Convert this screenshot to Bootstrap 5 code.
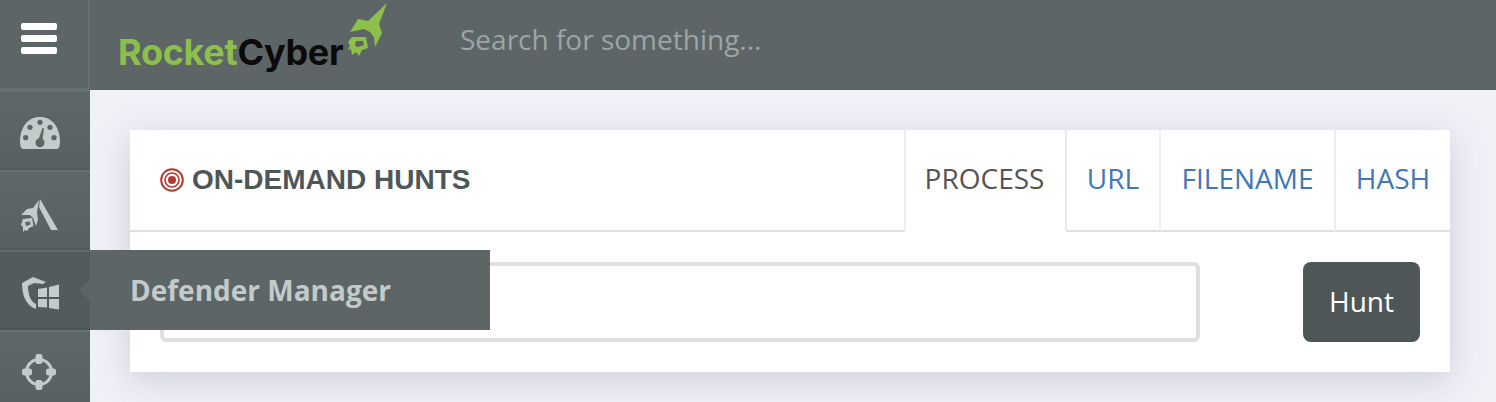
<!doctype html>
<html lang="en"><head><meta charset="utf-8"><title>On-Demand Hunts</title>
<link href="https://cdn.jsdelivr.net/npm/bootstrap@5.3.0/dist/css/bootstrap.min.css" rel="stylesheet">
<style>
html,body{height:402px;overflow:hidden}
body{background:#f0f1f7;font-family:"Open Sans",sans-serif}
.topbar{height:90px;background:#5d6566}
.burger{width:90px;height:90px;border-right:2px solid #677071;border-bottom:2px solid #677071;flex:none;padding:23px 0 0 21px;gap:5px}
.burger span{display:block;width:36px;height:7px;border-radius:2px;background:#fff}
.logo{margin-left:28px;height:90px;width:281px;flex:none}
.logo-text{left:0;top:31px;font-family:"Inter",sans-serif;font-weight:700;font-size:36px;line-height:42px;letter-spacing:-.3px;white-space:nowrap}
.logo-a{color:#8cc04b}.logo-b{color:#0b0b0b}
.logo svg{left:226px;top:0}
.search-box{margin-left:61px;width:600px;height:90px;border:0;background:transparent;font-size:28px;color:#fff;padding:0 0 13px;outline:0}
.search-box::placeholder{color:#9ca5a5;opacity:1}
.rail{width:90px;flex:none;background:#5d6566;height:312px}
.rail-item{height:80px;padding-left:20px;border-top:2px solid #687172;border-bottom:2px solid #525a5b;background:linear-gradient(#5f6768,#586061)}
.rail-item.current{background:#535b5c;border-top-color:#626a6b;border-bottom-color:#4d5455}
.ico-gauge{margin-top:6px}.ico-peak{margin-top:10px}.ico-shield{margin-top:6px}.ico-target{margin-top:3px}
.rail-tip{left:70px;top:-2px;margin-left:20px;width:400px;height:80px;background:#5d6566;color:#c3cbca;font-weight:700;font-size:28px;padding-left:40px;z-index:5}
.rail-tip::before{content:"";position:absolute;left:-11px;top:29px;border:11px solid transparent;border-left:0;border-right-color:#5d6566}
.stage{padding:40px 46px 0 40px}
.hunt-card{width:1320px;height:242px;background:#fff;box-shadow:0 8px 32px rgba(90,95,130,.24)}
.hunt-head{height:102px;border-bottom:2px solid #dfdfdf}
.hunt-title{padding-left:30px;font-family:"Liberation Sans",sans-serif;font-weight:700;font-size:28px;color:#4e5657;gap:8px}
.hunt-tabs{margin-bottom:-2px}
.hunt-tab{height:102px;padding-bottom:4px;font-size:28px;color:#3f78b5;text-decoration:none;border-right:2px solid #eee;border-bottom:2px solid #dfdfdf}
.hunt-tab:last-child{border-right:0}
.hunt-tab.on{color:#555;border-left:2px solid #eee;border-right:2px solid #e9e9e9;border-bottom-color:#fff;padding-right:2px}
.t1{width:163px}.t2{width:94px}.t3{width:175px}.t4{width:114px}
.hunt-body{padding:30px 30px 0}
.hunt-input{width:1040px;height:80px;border:4px solid #dfdfdf;border-radius:6px;outline:0;font-size:28px;padding:0 16px}
.hunt-btn{width:117px;height:80px;padding:0 0 2px;background:#4e5657;border:0;border-radius:8px;color:#fff;font-size:28px}
.hunt-btn:hover{background:#4e5657;color:#fff}
</style></head>
<body>
<header class="topbar d-flex align-items-center">
  <div class="burger d-flex flex-column">
    <span></span><span></span><span></span>
  </div>
  <div class="logo position-relative">
    <div class="logo-text position-absolute"><span class="logo-a">Rocket</span><span class="logo-b">Cyber</span></div>
    <svg class="position-absolute" width="48" height="62" viewBox="0 0 48 62" aria-hidden="true">
      <path fill="#8cc04b" d="M43 3 35 24 38 33 31 47 30 37 26 32 20 29 6 32 14 19 24 21Z"/>
      <path fill="#8cc04b" fill-rule="evenodd" d="M8 37 22 37 24 48 18 50 15 56 12 52 8 55 7 49 4 50 6 45 4 42ZM12 41 19 41 20 45 14 47 11 46Z"/>
    </svg>
  </div>
  <input class="search-box" type="text" placeholder="Search for something...">
</header>
<div class="d-flex">
  <nav class="rail">
    <div class="rail-item d-flex align-items-center">
      <svg class="ico-gauge" width="40" height="36" viewBox="1 0 40 36" aria-hidden="true"><path fill="#c4cccb" d="M1 27C1 12 9 2 21 2S41 12 41 27C41 30 40 34 38 34H4C2 34 1 30 1 27Z"/><g fill="#5d6566"><circle cx="11" cy="12.300" r="2.600"/><circle cx="21" cy="7.300" r="2.600"/><circle cx="31" cy="12.300" r="2.600"/><circle cx="6.700" cy="22.700" r="2.600"/><circle cx="35" cy="22.700" r="2.600"/><circle cx="21" cy="27.700" r="4.500"/><path d="M19 26 23.500 13 25 13.500 23 28Z"/></g></svg>
    </div>
    <div class="rail-item d-flex align-items-center">
      <svg class="ico-peak" width="40" height="36" viewBox="0 0 40 36" aria-hidden="true"><path fill="#c4cccb" d="M20 2 38 33H31L19 10Z"/><path fill="#c4cccb" d="M19 3 17 15 18 23 16 29 13 21 10 18 1 18 7 12 13 11Z"/><path fill="#c4cccb" fill-rule="evenodd" d="M3 22 12 21 13.500 29 9 31 7 34 5 33 3 35 3 30 1 28ZM5 25 10 24.500 10.500 27.500 6 29Z"/></svg>
    </div>
    <div class="rail-item current position-relative d-flex align-items-center">
      <svg class="ico-shield" width="40" height="36" viewBox="0 0 40 36" aria-hidden="true"><path fill="#c4cccb" d="M2 8C2 20 6 31 16 34V29C11 27 8 20 8 11L14 8 23 9 26 7 13 2Z"/><path fill="#c4cccb" d="M18 14 27 12.500V22H18ZM29 12 39 9.500V22H29ZM18 24H27V32.500L18 32ZM29 24H39V34.500L29 33Z"/></svg>
      <div class="rail-tip position-absolute d-flex align-items-center">Defender Manager</div>
    </div>
    <div class="rail-item d-flex align-items-center">
      <svg class="ico-target" width="40" height="36" viewBox="-1 0 40 36" aria-hidden="true"><circle cx="18" cy="18" r="12.500" fill="none" stroke="#c4cccb" stroke-width="3"/><g fill="#c4cccb"><rect x="14.500" y="0" width="7" height="10" rx="2.500"/><rect x="14.500" y="26" width="7" height="10" rx="2.500"/><rect x="1" y="14.500" width="10" height="7" rx="2.500"/><rect x="25" y="14.500" width="10" height="7" rx="2.500"/></g></svg>
    </div>
  </nav>
  <main class="stage flex-grow-1">
    <section class="hunt-card">
      <div class="hunt-head d-flex justify-content-between">
        <div class="hunt-title d-flex align-items-center">
          <svg width="24" height="24" viewBox="0 0 24 24" aria-hidden="true"><g fill="none" stroke="#b7382f"><circle cx="12" cy="12" r="10.800" stroke-width="2"/><circle cx="12" cy="12" r="7" stroke-width="1.600"/></g><circle cx="12" cy="12" r="4" fill="#b7382f"/></svg>
          <span>ON-DEMAND HUNTS</span>
        </div>
        <div class="hunt-tabs d-flex">
          <a class="hunt-tab on t1 d-flex align-items-center justify-content-center" href="#">PROCESS</a>
          <a class="hunt-tab t2 d-flex align-items-center justify-content-center" href="#">URL</a>
          <a class="hunt-tab t3 d-flex align-items-center justify-content-center" href="#">FILENAME</a>
          <a class="hunt-tab t4 d-flex align-items-center justify-content-center" href="#">HASH</a>
        </div>
      </div>
      <div class="hunt-body d-flex justify-content-between">
        <input class="hunt-input" type="text" aria-label="Process">
        <button class="btn hunt-btn" type="button">Hunt</button>
      </div>
    </section>
  </main>
</div>
<script src="https://cdn.jsdelivr.net/npm/bootstrap@5.3.0/dist/js/bootstrap.bundle.min.js"></script>
</body></html>
